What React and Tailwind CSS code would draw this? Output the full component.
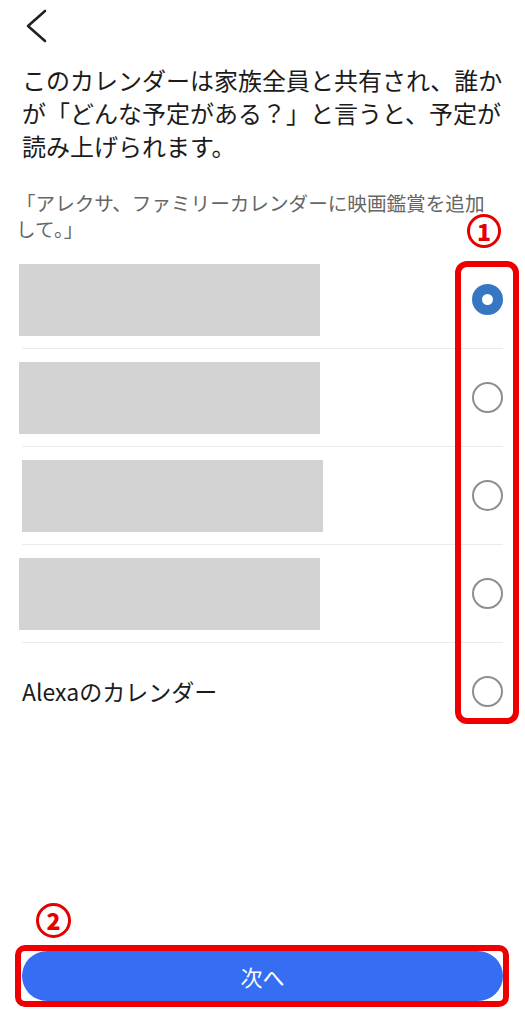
const rows = [
  { id: 1, kind: "box", shift: true, selected: true },
  { id: 2, kind: "box", shift: true },
  { id: 3, kind: "box", shift: false },
  { id: 4, kind: "box", shift: true },
  { id: 5, kind: "text", label: "Alexaのカレンダー" },
];

const Radio = ({ selected }) =>
  selected ? (
    <span className="flex h-[31px] w-[31px] items-center justify-center rounded-full bg-[#3677c4]">
      <span className="h-[11px] w-[11px] rounded-full bg-white" />
    </span>
  ) : (
    <span className="h-[31px] w-[31px] rounded-full border-[2.5px] border-[#8e8e8e]" />
  );

export default function App() {
  return (
    <div
      className="relative flex h-[1024px] w-full flex-col bg-white"
      style={{ fontFamily: '"Noto Sans CJK JP", "Noto Sans", sans-serif' }}
    >
      <div className="h-[43px] pl-[25px] pt-[9px]">
        <svg width="22" height="34" viewBox="0 0 22 34" fill="none">
          <polyline points="20,2 3,17 20,32" stroke="#222" strokeWidth="2.6" strokeLinecap="round" strokeLinejoin="round" />
        </svg>
      </div>

      <p className="mt-[20px] pl-[22px] pr-[16px] text-[24px] leading-[33px] text-[#1b1b1b]">
        このカレンダーは家族全員と共有され、誰か
        <br />
        が「どんな予定がある？」と言うと、予定が
        <br />
        読み上げられます。
      </p>

      <p className="mt-[28px] pl-[16px] pr-[16px] text-[19.6px] leading-[26px] text-[#666]">
        「アレクサ、ファミリーカレンダーに映画鑑賞を追加
        <br />
        して。」
      </p>

      <div className="mt-[9px] px-[22px]">
        {rows.map((row, i) => (
          <div key={row.id} className={i < rows.length - 1 ? "border-b border-[#ebebeb]" : ""}>
            <div className="flex h-[97px] items-center justify-between">
              {row.kind === "box" ? (
                <div className={`h-[72px] w-[301px] bg-[#d3d3d3] ${row.shift ? "-ml-[3px]" : ""}`} />
              ) : (
                <span className="text-[23px] text-[#1b1b1b]">{row.label}</span>
              )}
              <Radio selected={row.selected} />
            </div>
          </div>
        ))}
      </div>

      <div className="mt-auto px-[22px] pb-[23px]">
        <button className="flex h-[50px] w-full items-center justify-center rounded-full bg-[#356ef2] text-[22px] text-white">
          次へ
        </button>
      </div>

      {/* annotations */}
      <span className="absolute left-[467px] top-[214px] flex h-[34px] w-[34px] items-center justify-center rounded-full border-[3.5px] border-[#e60000] text-[23px] font-extrabold leading-none text-[#e60000]">
        1
      </span>
      <div className="absolute left-[455px] top-[261px] h-[463px] w-[64px] rounded-[12px] border-[6px] border-[#ee0000]" />

      <span className="absolute left-[36px] top-[903px] flex h-[35px] w-[35px] items-center justify-center rounded-full border-[3.5px] border-[#e60000] text-[23px] font-extrabold leading-none text-[#e60000]">
        2
      </span>
      <div className="absolute left-[15px] top-[945px] h-[62px] w-[494px] rounded-[10px] border-[6px] border-[#ee0000]" />
    </div>
  );
}
